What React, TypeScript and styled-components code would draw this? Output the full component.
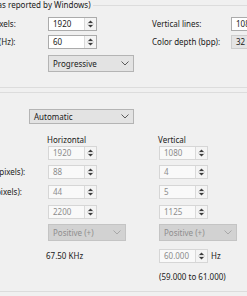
import React from 'react';
import styled, { createGlobalStyle } from 'styled-components';

const GlobalStyle = createGlobalStyle`
  html, body {
    margin: 0;
    padding: 0;
    background: #f0f0f0;
    overflow: hidden;
  }
  body {
    font-family: "Noto Sans", "Open Sans", sans-serif;
    font-size: 8px;
    color: #1a1a1a;
  }
`;

const Page = styled.div`
  margin-left: -66px;
  width: 420px;
  height: 296px;
`;

const GroupBox = styled.div<{ $top: number }>`
  position: relative;
  margin-top: ${p => p.$top}px;
  border: 1px solid #dcdcdc;
  padding: ${p => (p.$top === 5 ? '11px 0 15px 16px' : '16px 0 9px 16px')};
`;

const GroupTitle = styled.span`
  position: absolute;
  top: -6px;
  left: 5px;
  padding: 0 2px;
  line-height: 10px;
  background: #f0f0f0;
  white-space: nowrap;
`;

const ModeGrid = styled.div`
  display: grid;
  grid-template-columns: 97px 49px 55px 79px 60px;
  grid-template-rows: 18px 20px 17px;
  align-items: start;
`;

const TimingGrid = styled.div`
  display: grid;
  grid-template-columns: 97px 111px 1fr;
  grid-template-rows: 13px 19px 20px 20px 19px 25px 22px 11px;
  align-items: start;
`;

const StandardRow = styled.div`
  display: flex;
  align-items: center;
  margin-bottom: 9px;
`;

const Label = styled.span<{ $w?: number }>`
  display: block;
  width: ${p => (p.$w ? `${p.$w}px` : 'auto')};
  line-height: 14px;
  white-space: nowrap;
`;

const Header = styled.span`
  line-height: 13px;
  white-space: nowrap;
  margin-left: -1px;
`;

const PlainValue = styled.span`
  line-height: 14px;
  margin-left: -2px;
  white-space: nowrap;
`;

const Spin = styled.div<{ $disabled?: boolean }>`
  display: flex;
  width: 49px;
  height: 14px;
  box-sizing: border-box;
  border: 1px solid ${p => (p.$disabled ? '#d6d6d6' : '#ababab')};
  background: ${p => (p.$disabled ? '#f9f9f9' : '#ffffff')};
  color: ${p => (p.$disabled ? '#8c8c8c' : '#1a1a1a')};
`;

const SpinValue = styled.span`
  flex: 1;
  padding-left: 4px;
  line-height: 12px;
`;

const SpinButtons = styled.div`
  width: 11px;
  border-left: 1px solid #dadada;
  background: #f4f4f4;
  display: flex;
  align-items: center;
  justify-content: center;
`;

const TextBox = styled.div<{ $readOnly?: boolean }>`
  width: 60px;
  height: 14px;
  box-sizing: border-box;
  border: 1px solid ${p => (p.$readOnly ? '#cdcdcd' : '#ababab')};
  background: ${p => (p.$readOnly ? '#e4e4e4' : '#ffffff')};
  padding-left: 4px;
  line-height: 12px;
`;

const Combo = styled.div<{ $w: number; $h?: number; $disabled?: boolean }>`
  display: flex;
  align-items: center;
  justify-content: space-between;
  width: ${p => p.$w}px;
  height: ${p => p.$h || 17}px;
  box-sizing: border-box;
  padding: 0 4px 0 4px;
  border: 1px solid ${p => (p.$disabled ? '#c4c4c4' : '#b4b4b4')};
  background: ${p => (p.$disabled ? '#d2d2d2' : '#e3e3e3')};
  color: ${p => (p.$disabled ? '#8e8e8e' : '#1a1a1a')};
  white-space: nowrap;
`;

const Unit = styled.span`
  line-height: 14px;
  margin-left: 3px;
`;

const SpinCell = styled.div`
  display: flex;
  align-items: center;
`;

const Range = styled.span`
  line-height: 11px;
  white-space: nowrap;
`;

const Arrows = () => (
  <svg width="9" height="12" viewBox="0 0 9 12">
    <path d="M2 5 L4.5 2.5 L7 5 Z" fill="#3c3c3c" />
    <line x1="1" y1="6" x2="8" y2="6" stroke="#c6c6c6" strokeWidth="1" />
    <path d="M2 7 L4.5 9.5 L7 7 Z" fill="#3c3c3c" />
  </svg>
);

const Chevron = ({ disabled }: { disabled?: boolean }) => (
  <svg width="8" height="5" viewBox="0 0 8 5">
    <polyline points="0.5,0.5 4,4 7.5,0.5" fill="none" stroke={disabled ? '#a8a8a8' : '#5a5a5a'} strokeWidth="1" />
  </svg>
);

const SpinBox = ({ value, disabled }: { value: string; disabled?: boolean }) => (
  <Spin $disabled={disabled}>
    <SpinValue>{value}</SpinValue>
    <SpinButtons>
      <Arrows />
    </SpinButtons>
  </Spin>
);

const ComboBox = ({ value, w, h, disabled }: { value: string; w: number; h?: number; disabled?: boolean }) => (
  <Combo $w={w} $h={h} $disabled={disabled}>
    <span>{value}</span>
    <Chevron disabled={disabled} />
  </Combo>
);

const timingRows = [
  { label: 'Active pixels:', h: '1920', v: '1080' },
  { label: 'Front porch (pixels):', h: '88', v: '4' },
  { label: 'Sync width (pixels):', h: '44', v: '5' },
  { label: 'Total pixels:', h: '2200', v: '1125' },
];

export default function App() {
  return (
    <Page>
      <GlobalStyle />
      <GroupBox $top={5}>
        <GroupTitle>Display mode (as reported by Windows)</GroupTitle>
        <ModeGrid>
          <Label>Horizontal pixels:</Label>
          <SpinBox value="1920" />
          <span />
          <Label>Vertical lines:</Label>
          <TextBox>1080</TextBox>

          <Label>Refresh rate (Hz):</Label>
          <SpinBox value="60" />
          <span />
          <Label>Color depth (bpp):</Label>
          <TextBox $readOnly>32</TextBox>

          <Label>Scan type:</Label>
          <div style={{ gridColumn: '2 / span 2' }}>
            <ComboBox value="Progressive" w={86} />
          </div>
        </ModeGrid>
      </GroupBox>

      <GroupBox $top={4}>
        <GroupTitle>Timing</GroupTitle>
        <StandardRow>
          <Label $w={78}>Standard:</Label>
          <ComboBox value="Automatic" w={105} h={15} />
        </StandardRow>
        <TimingGrid>
          <span />
          <Header>Horizontal</Header>
          <Header>Vertical</Header>

          {timingRows.map(r => (
            <React.Fragment key={r.label}>
              <Label>{r.label}</Label>
              <SpinBox value={r.h} disabled />
              <SpinBox value={r.v} disabled />
            </React.Fragment>
          ))}

          <Label>Polarity:</Label>
          <ComboBox value="Positive (+)" w={78} disabled />
          <ComboBox value="Positive (+)" w={78} disabled />

          <Label>Refresh rate:</Label>
          <PlainValue>67.50 KHz</PlainValue>
          <SpinCell>
            <SpinBox value="60.000" disabled />
            <Unit>Hz</Unit>
          </SpinCell>

          <span />
          <span />
          <Range>(59.000 to 61.000)</Range>
        </TimingGrid>
      </GroupBox>
    </Page>
  );
}
